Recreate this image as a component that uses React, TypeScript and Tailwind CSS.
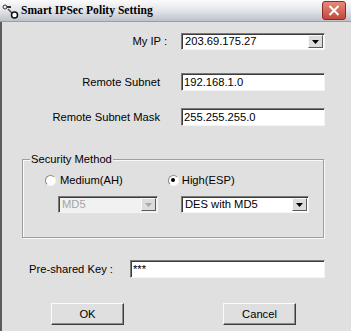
import React from "react";

const sunken =
  "border border-t-[#7a7a7a] border-l-[#7a7a7a] border-b-[#f4f4f4] border-r-[#f4f4f4] shadow-[inset_1px_1px_0_#3c3c3c]";

const Arrow = ({ disabled }: { disabled?: boolean }) => (
  <div className="w-[15px] h-full flex items-center justify-center bg-[#dcdcdc] border border-t-[#fafafa] border-l-[#fafafa] border-b-[#5a5a5a] border-r-[#5a5a5a]">
    <svg width="7" height="4" viewBox="0 0 7 4">
      <path d="M0 0h7L3.5 4z" fill={disabled ? "#a8a8a8" : "#000"} />
    </svg>
  </div>
);

const Combo = ({ value, className, disabled }: { value: string; className: string; disabled?: boolean }) => (
  <div className={`${sunken} flex items-stretch ${disabled ? "bg-[#f1f1f1] text-[#a4a4a4]" : "bg-white text-black"} ${className}`}>
    <div className="flex-1 pl-[3px] leading-[15px]">{value}</div>
    <div className="p-px">
      <Arrow disabled={disabled} />
    </div>
  </div>
);

const Field = ({ value, className }: { value: string; className: string }) => (
  <div className={`${sunken} bg-white pl-[2px] leading-[16px] ${className}`}>{value}</div>
);

const Radio = ({ checked }: { checked?: boolean }) => (
  <div className="w-[11px] h-[11px] rounded-full bg-white border border-t-[#8a8a8a] border-l-[#8a8a8a] border-b-[#f6f6f6] border-r-[#f6f6f6] flex items-center justify-center">
    {checked && <div className="w-[4px] h-[4px] rounded-full bg-black" />}
  </div>
);

const Button = ({ label, className }: { label: string; className: string }) => (
  <div className={`h-[22px] flex items-center justify-center bg-[#dfdfdf] border border-t-[#fbfbfb] border-l-[#fbfbfb] border-b-[#3e3e3e] border-r-[#3e3e3e] shadow-[inset_-1px_-1px_0_#8c8c8c] ${className}`}>
    {label}
  </div>
);

export default function App() {
  return (
    <div className="w-[351px] h-[331px] overflow-hidden bg-[#e0e0e0] font-['Liberation_Sans',Arial,sans-serif] text-[11.2px] text-black">
      {/* title bar */}
      <div className="h-[22px] flex items-center bg-gradient-to-b from-[#fbfbfc] via-[#e4e5ea] to-[#bfc1cb] border-b border-[#9a9ca6]">
        <svg width="18" height="16" viewBox="0 0 18 16" className="ml-[2px]">
          <path d="M2 4h7" stroke="#333" strokeWidth="2" />
          <circle cx="3" cy="4" r="2" fill="#eee" stroke="#333" strokeWidth="1" />
          <path d="M6 6l5 5" stroke="#555" strokeWidth="1.5" />
          <circle cx="12.5" cy="12" r="3" fill="#fff" stroke="#111" strokeWidth="1.5" />
        </svg>
        <div className="ml-[1px] font-['Liberation_Serif',serif] font-bold text-[11.6px]">Smart IPSec Polity Setting</div>
        <div className="ml-auto mr-[5px] w-[24px] h-[19px] rounded-[3px] bg-gradient-to-b from-[#e58a7a] to-[#c2463c] border border-[#8c2a25] flex items-center justify-center">
          <svg width="12" height="11" viewBox="0 0 12 11">
            <path d="M1.5 1l9 9M10.5 1l-9 9" stroke="#fff" strokeWidth="2" />
          </svg>
        </div>
      </div>

      <div className="h-[309px] border-l-2 border-[#5c5c5c]">
        {/* My IP */}
        <div className="flex items-center pt-[11px]">
          <div className="w-[165px] text-right">My IP :</div>
          <Combo value="203.69.175.27" className="ml-[14px] w-[144px] h-[17px]" />
        </div>

        <div className="flex items-center mt-[23px]">
          <div className="w-[158px] text-right">Remote Subnet</div>
          <Field value="192.168.1.0" className="ml-[21px] w-[144px] h-[18px]" />
        </div>

        <div className="flex items-center mt-[17px]">
          <div className="w-[158px] text-right">Remote Subnet Mask</div>
          <Field value="255.255.255.0" className="ml-[21px] w-[144px] h-[18px]" />
        </div>

        {/* group box */}
        <div className="relative ml-[20px] mt-[33px] w-[302px] h-[79px] border border-[#9e9e9e] shadow-[inset_1px_1px_0_#f8f8f8,1px_1px_0_#f8f8f8]">
          <div className="absolute -top-[8px] left-[7px] px-[1px] bg-[#e0e0e0] leading-[14px]">Security Method</div>
          <div className="flex items-center mt-[13px] h-[14px]">
            <div className="ml-[22px]"><Radio /></div>
            <div className="ml-[4px]">Medium(AH)</div>
            <div className="ml-[45px]"><Radio checked /></div>
            <div className="ml-[3px]">High(ESP)</div>
          </div>
          <div className="flex mt-[9px]">
            <Combo value="MD5" disabled className="ml-[35px] w-[100px] h-[17px]" />
            <Combo value="DES with MD5" className="ml-[23px] w-[128px] h-[17px]" />
          </div>
        </div>

        {/* pre-shared key */}
        <div className="flex items-center mt-[22px]">
          <div className="ml-[27px] w-[101px]">Pre-shared Key :</div>
          <Field value="***" className="w-[195px] h-[18px]" />
        </div>

        <div className="flex mt-[25px]">
          <Button label="OK" className="ml-[49px] w-[73px]" />
          <Button label="Cancel" className="ml-[99px] w-[73px]" />
        </div>
      </div>
    </div>
  );
}
